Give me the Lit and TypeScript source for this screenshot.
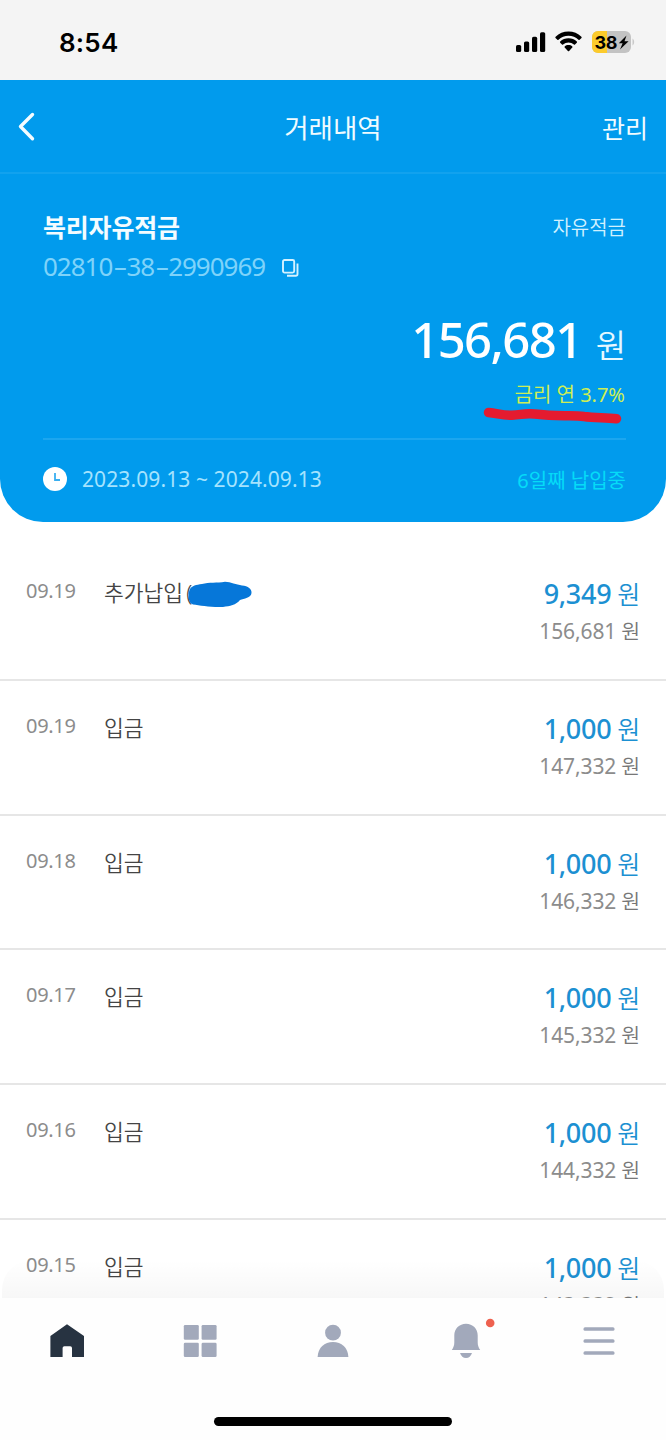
import { LitElement, html, css, svg } from "lit";
import { customElement } from "lit/decorators.js";

interface Entry {
  date: string;
  label: string;
  amount: string;
  balance: string;
  masked?: boolean;
}

const ENTRIES: Entry[] = [
  { date: "09.19", label: "추가납입", amount: "9,349", balance: "156,681", masked: true },
  { date: "09.19", label: "입금", amount: "1,000", balance: "147,332" },
  { date: "09.18", label: "입금", amount: "1,000", balance: "146,332" },
  { date: "09.17", label: "입금", amount: "1,000", balance: "145,332" },
  { date: "09.16", label: "입금", amount: "1,000", balance: "144,332" },
  { date: "09.15", label: "입금", amount: "1,000", balance: "143,332" },
];

const base = css`
  :host {
    display: block;
    font-family: "Noto Sans", "Noto Sans CJK KR", sans-serif;
  }
  * {
    box-sizing: border-box;
  }
  svg {
    display: block;
    overflow: visible;
  }
`;

@customElement("status-bar")
export class StatusBar extends LitElement {
  static styles = [
    base,
    css`
      .bar {
        height: 80px;
        background: #f4f4f4;
        display: flex;
        justify-content: space-between;
        align-items: flex-start;
        padding: 0 31px 0 59px;
      }
      .time {
        margin-top: 28px;
        font: 600 26px/30px Inter, sans-serif;
        letter-spacing: 0.2px;
        color: #000;
      }
      .icons {
        display: flex;
        gap: 10px;
        margin-top: 31px;
      }
      .charge {
        font: 700 18px Inter, sans-serif;
        letter-spacing: -0.4px;
      }
    `,
  ];

  render() {
    return html`
      <div class="bar">
        <div class="time">8:54</div>
        <div class="icons">
          <svg width="29" height="22" viewBox="0 0 29 22">
            <rect x="0" y="14" width="5.2" height="7" rx="1.6" />
            <rect x="8" y="10.4" width="5.2" height="10.6" rx="1.6" />
            <rect x="16" y="5.8" width="5.2" height="15.2" rx="1.6" />
            <rect x="24" y="1.2" width="5.2" height="19.8" rx="1.6" />
          </svg>
          <svg width="27" height="22" viewBox="0 0 27 22">
            <path
              d="M13.5 0.6C18.5 .6 23 2.5 26.4 5.7C26.8 6.1 26.8 6.5 26.5 6.9L24.6 8.7C24.3 9 23.9 9 23.5 8.7C20.8 6.200 17.300 4.800 13.500 4.800S6.200 6.200 3.500 8.700C3.100 9 2.700 9 2.400 8.700L.5 6.900C.2 6.500 .2 6.100 .6 5.700C4 2.500 8.500 .6 13.500 .6Z"
            />
            <path
              d="M13.500 7.300C16.700 7.300 19.600 8.500 21.800 10.500C22.200 10.900 22.200 11.300 21.800 11.700L20 13.400C19.700 13.700 19.300 13.700 18.900 13.400C17.400 12.100 15.500 11.400 13.500 11.400S9.600 12.100 8.100 13.400C7.700 13.700 7.300 13.700 7 13.400L5.200 11.700C4.800 11.300 4.800 10.900 5.200 10.500C7.400 8.500 10.300 7.300 13.500 7.300Z"
            />
            <path
              d="M13.500 14C15 14 16.300 14.500 17.300 15.400C17.700 15.700 17.700 16.100 17.300 16.500L14.100 19.900C13.700 20.300 13.300 20.300 12.900 19.900L9.700 16.500C9.300 16.100 9.300 15.700 9.700 15.400C10.700 14.500 12 14 13.500 14Z"
            />
          </svg>
          <svg class="charge" width="43" height="22" viewBox="0 0 43 22">
            <defs>
              <clipPath id="cell"><rect width="39" height="22" rx="6" /></clipPath>
            </defs>
            <g clip-path="url(#cell)">
              <rect width="39" height="22" fill="#c3c3c3" />
              <rect width="15" height="22" fill="#fccb2c" />
            </g>
            <path d="M40.500 7.500C42.700 9 42.700 13 40.500 14.500Z" fill="#c9c9c9" />
            <text x="2.600" y="17.600">38</text>
            <path d="M34.500 4.500L26.800 12.300H30.600L28 18.500L36.600 10.300H32.500Z" />
          </svg>
        </div>
      </div>
    `;
  }
}

@customElement("account-card")
export class AccountCard extends LitElement {
  static styles = [
    base,
    css`
      .card {
        height: 442px;
        background: #019bed;
        border-radius: 0 0 43px 43px;
        color: #fff;
      }
      .header {
        height: 94px;
        border-bottom: 2px solid #12a2ee;
        display: grid;
        grid-template-columns: 1fr auto 1fr;
        align-items: center;
        padding: 2px 18px 0 18px;
        font-size: 26.500px;
        line-height: 38px;
        color: #f0fbff;
      }
      .title {
        position: relative;
        top: 1px;
      }
      .manage {
        position: relative;
        top: 1px;
        text-align: right;
        font-size: 25px;
      }
      .body {
        padding: 34px 40px 0 43px;
      }
      .line {
        display: flex;
        justify-content: space-between;
        align-items: center;
      }
      .name {
        font-size: 25px;
        line-height: 36px;
        font-weight: 700;
        letter-spacing: -0.2px;
        color: #f4fcff;
      }
      .kind {
        font-size: 20px;
        line-height: 36px;
        padding-top: 2px;
        font-weight: 350;
        color: #d0f1ff;
      }
      .number {
        display: flex;
        align-items: center;
        height: 40px;
        font-size: 26px;
        font-weight: 400;
        letter-spacing: -1px;
        color: #7ed3fa;
      }
      .dash {
        display: inline-block;
        width: 14px;
        text-align: center;
        transform: translateX(0.5px) scaleX(1.7);
      }
      .copy {
        margin: 3px 0 0 17px;
      }
      .total {
        display: flex;
        justify-content: flex-end;
        align-items: baseline;
        margin-top: 19px;
        height: 68px;
        line-height: 68px;
        font-size: 49px;
        font-weight: 500;
        letter-spacing: -1.600px;
      }
      .won {
        margin-left: 14px;
        font-size: 33px;
        font-weight: 350;
        letter-spacing: 0;
        color: #e6f8ff;
      }
      .rate {
        position: relative;
        height: 30px;
        margin-top: 7px;
        font-size: 20px;
        line-height: 30px;
        text-align: right;
        color: #cdee55;
        padding-right: 1px;
      }
      .marker {
        position: absolute;
        right: 3px;
        top: 27px;
      }
      .term {
        margin-top: 28px;
        border-top: 2px solid #1ca6ef;
        height: 80px;
      }
      .period {
        display: flex;
        align-items: center;
        gap: 15px;
        font-size: 21px;
        color: #a5e3fe;
        font-weight: 400;
        letter-spacing: 0.1px;
      }
      .progress {
        font-size: 20px;
        color: #05dbf8;
      }
    `,
  ];

  render() {
    return html`
      <div class="card">
        <div class="header">
          <svg width="17" height="28" viewBox="0 0 17 28">
            <path d="M14.500 1.500L2.500 13.500L14.500 25.800" fill="none" stroke="#f4fcff" stroke-width="3.400" stroke-linecap="round" stroke-linejoin="round" />
          </svg>
          <span class="title">거래내역</span>
          <span class="manage">관리</span>
        </div>
        <div class="body">
          <div class="line">
            <span class="name">복리자유적금</span>
            <span class="kind">자유적금</span>
          </div>
          <div class="number">
            <span>02810<span class="dash">-</span>38<span class="dash">-</span>2990969</span>
            <svg class="copy" width="17" height="18" viewBox="0 0 17 18" fill="none" stroke="#d5f2ff" stroke-width="1.900">
              <rect x="1" y="1" width="11.200" height="12.600" rx="1.500" />
              <path d="M15.500 4.500V15Q15.500 16.800 13.800 16.800H5" />
            </svg>
          </div>
          <div class="total">156,681<span class="won">원</span></div>
          <div class="rate">
            금리 연 3.7%
            <svg class="marker" width="140" height="18" viewBox="0 0 140 18">
              <path d="M5.500 5.500C15 6.500 20 8.500 29 8.200C37 8 40 6.500 47 6.700C56 7 62 8.500 73 8.500C84 9 92 8 101 9.500C112 11 122 10.500 133.500 11.800" fill="none" stroke="#e51b2f" stroke-width="9.500" stroke-linecap="round" />
            </svg>
          </div>
          <div class="line term">
            <div class="period">
              <svg width="24" height="24" viewBox="0 0 24 24">
                <circle cx="12" cy="12" r="12" fill="#fff" />
                <path d="M12 6V13H17" fill="none" stroke="#3aaff0" stroke-width="1.800" />
              </svg>
              <span class="dates">2023.09.13 ~ 2024.09.13</span>
            </div>
            <span class="progress">6일째 납입중</span>
          </div>
        </div>
      </div>
    `;
  }
}

@customElement("entry-list")
export class EntryList extends LitElement {
  static styles = [
    base,
    css`
      .list {
        padding-top: 24px;
      }
      .row {
        height: 134.800px;
        border-bottom: 2px solid #e6e6e6;
        display: grid;
        grid-template-columns: 78px 1fr auto;
        align-items: start;
        padding: 29px 26px 0;
      }
      .date {
        margin-top: 1px;
        font-size: 20px;
        line-height: 30px;
        font-weight: 400;
        letter-spacing: -0.3px;
        color: #8c8c8c;
      }
      .label {
        position: relative;
        margin-top: 2px;
        font-size: 21.500px;
        line-height: 32px;
        font-weight: 350;
        color: #444;
      }
      .paren {
        margin-left: 3px;
      }
      .scribble {
        position: absolute;
        left: 83px;
        top: 4px;
      }
      .sums {
        display: flex;
        flex-direction: column;
        align-items: flex-end;
      }
      .amount {
        font-size: 27px;
        line-height: 38px;
        font-weight: 500;
        letter-spacing: -0.3px;
        color: #1c90d2;
      }
      .unit {
        font-size: 25px;
        font-weight: 350;
        margin-left: 6px;
      }
      .balance {
        font-size: 21px;
        line-height: 37px;
        font-weight: 400;
        letter-spacing: -0.1px;
        color: #8c8c8c;
      }
      .small {
        font-size: 20.500px;
        margin-left: 5px;
        font-weight: 350;
        color: #777;
      }
    `,
  ];

  render() {
    return html`
      <div class="list">
        ${ENTRIES.map(
          (e) => html`
            <div class="row">
              <span class="date">${e.date}</span>
              <span class="label"
                >${e.label}${e.masked
                  ? html`<span class="paren">(</span><svg class="scribble" width="65" height="27" viewBox="0 0 65 27">
                        <path
                          d="M3 8C5 4.500 9 4 15 3C22 1 30 2 38 .7C44 1 49 3.500 55 4.500C61 5 65 8 64.500 12C64 17 57 17.500 53 19C49 24 43 25 36 26C24 26.500 13 24.500 6 23.500C2 22 2.500 19 1.500 17C2.500 14 1 12 3 8Z"
                          fill="#0677d9"
                        />
                      </svg>`
                  : ""}</span
              >
              <div class="sums">
                <span class="amount">${e.amount}<span class="unit">원</span></span>
                <span class="balance">${e.balance}<span class="small">원</span></span>
              </div>
            </div>
          `
        )}
      </div>
    `;
  }
}

const TABS = [
  svg`<path d="M17 .3L34 12.100V33H22V24Q22 22.200 20.200 22.200H14.400Q12.600 22.200 12.600 24V33H.4V12.100Z" fill="#273341" />`,
  svg`<g fill="#a2a9bb"><rect x=".8" y="1" width="15" height="14.800" rx="1.300"/><rect x="18.600" y="1" width="15" height="14.800" rx="1.300"/><rect x=".8" y="18.800" width="15" height="14.200" rx="1.300"/><rect x="18.600" y="18.800" width="15" height="14.200" rx="1.300"/></g>`,
  svg`<g fill="#a2a9bb"><circle cx="17" cy="8.700" r="7.900"/><path d="M1.600 33C2 23.500 8.500 18 17 18S32 23.500 32.400 33Z"/></g>`,
  svg`<g fill="#a2a9bb"><path d="M17 -.2C23.700 -.2 28.700 4.800 28.700 11.300V18.300C28.700 21.500 29.500 23.500 31.200 26H2.800C4.500 23.500 5.300 21.500 5.300 18.300V11.300C5.300 4.800 10.300 -.2 17 -.2Z"/><path d="M11 29H23C22 32.100 19.800 34 17 34S12 32.100 11 29Z"/></g><circle cx="41.200" cy="-1" r="4.300" fill="#ee614f"/>`,
  svg`<g fill="#a2a9bb"><rect x="1.500" y="3.200" width="31" height="3.500" rx="1.500"/><rect x="1.500" y="15.200" width="31" height="3.500" rx="1.500"/><rect x="1.500" y="27.200" width="31" height="3.500" rx="1.500"/></g>`,
];

@customElement("tab-bar")
export class TabBar extends LitElement {
  static styles = [
    base,
    css`
      .nav {
        position: relative;
        height: 142px;
        background: #fefefe;
        display: flex;
        flex-direction: column;
        align-items: center;
        padding-top: 26px;
      }
      .nav::before {
        content: "";
        position: absolute;
        left: 2px;
        right: 2px;
        bottom: 100%;
        height: 38px;
        border-radius: 30px 30px 0 0;
        background: linear-gradient(rgba(0, 0, 0, 0), rgba(0, 0, 0, 0.03));
      }
      .tabs {
        width: 100%;
        display: grid;
        grid-template-columns: repeat(5, 1fr);
        justify-items: center;
      }
      .grip {
        margin-top: 58px;
        width: 238px;
        height: 9px;
        border-radius: 5px;
        background: #000;
      }
    `,
  ];

  render() {
    return html`
      <div class="nav">
        <div class="tabs">
          ${TABS.map((t) => html`<svg width="34" height="35" viewBox="0 0 34 35">${t}</svg>`)}
        </div>
        <div class="grip"></div>
      </div>
    `;
  }
}

@customElement("app-root")
export class AppRoot extends LitElement {
  static styles = css`
    :host {
      display: block;
    }
    .screen {
      display: flex;
      flex-direction: column;
      width: 666px;
      height: 1440px;
      overflow: hidden;
      background: #fff;
    }
    .entries {
      flex: 1;
      min-height: 0;
      overflow: hidden;
    }
  `;

  render() {
    return html`
      <div class="screen">
        <status-bar></status-bar>
        <account-card></account-card>
        <entry-list class="entries"></entry-list>
        <tab-bar></tab-bar>
      </div>
    `;
  }
}
